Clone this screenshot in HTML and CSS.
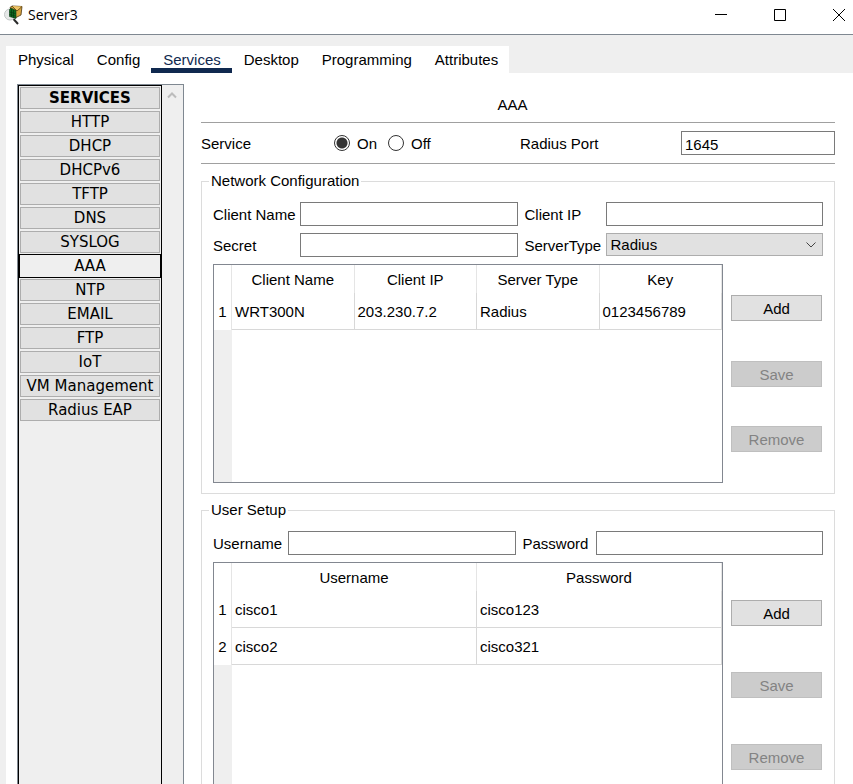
FILE: index.html
```html
<!DOCTYPE html>
<html lang="en">
<head>
  <meta charset="UTF-8" />
  <meta name="viewport" content="width=device-width, initial-scale=1.0" />
  <title>Server3</title>
  <link rel="stylesheet" href="styles.css">
</head>
<body>
  <header class="titlebar">
    <svg class="app-icon" viewBox="0 0 20 20" width="20" height="20" aria-hidden="true">
      <path d="M9.500 14l4.500 5" stroke="#2a2a2a" stroke-width="2"/>
      <circle cx="6" cy="9.500" r="5.500" fill="#e6e8e8" stroke="#c3c7c7"/>
      <path d="M6 2.500L8 1l10 .5-1 8.500-6 3z" fill="#d9a441" stroke="#4a3510" stroke-width=".8"/>
      <path d="M8 1l5 5 5-4.500" fill="#edc468" stroke="#5c400f" stroke-width=".8"/>
      <path d="M5.500 4.500L7 3l5 2.500v8L5.500 11.500z" fill="#0d6b22" stroke="#07350f" stroke-width=".6"/>
      <path d="M7.500 4v8M9.500 5v8M5.500 7l6 1.500M5.500 9.500l6 1.500" stroke="#06380f" stroke-width=".7"/>
    </svg>
    <span class="titlebar-name">Server3</span>
    <div class="window-buttons">
      <button type="button" aria-label="Minimize"><svg viewBox="0 0 12 12" width="12" height="12"><path d="M0 5.500h12"/></svg></button>
      <button type="button" aria-label="Maximize"><svg viewBox="0 0 12 12" width="12" height="12"><path d="M.5.5h11v11H.5z"/></svg></button>
      <button type="button" aria-label="Close"><svg viewBox="0 0 12 12" width="12" height="12"><path d="M0 0l12 12M12 0L0 12"/></svg></button>
    </div>
  </header>

  <div class="window-body">
    <nav class="tabs">
      <a href="#physical">Physical</a>
      <a href="#config">Config</a>
      <a href="#services" class="active">Services</a>
      <a href="#desktop">Desktop</a>
      <a href="#programming">Programming</a>
      <a href="#attributes">Attributes</a>
    </nav>

    <div class="page">
      <!-- Service list -->
      <aside class="sidebar">
        <div class="service-list">
          <button type="button" class="list-title">SERVICES</button>
          <button type="button">HTTP</button>
          <button type="button">DHCP</button>
          <button type="button">DHCPv6</button>
          <button type="button">TFTP</button>
          <button type="button">DNS</button>
          <button type="button">SYSLOG</button>
          <button type="button" class="selected">AAA</button>
          <button type="button">NTP</button>
          <button type="button">EMAIL</button>
          <button type="button">FTP</button>
          <button type="button">IoT</button>
          <button type="button">VM Management</button>
          <button type="button">Radius EAP</button>
        </div>
        <div class="scrollbar">
          <svg viewBox="0 0 10 8" width="10" height="8" aria-hidden="true"><path d="M1 6.500l4-4 4 4"/></svg>
        </div>
      </aside>

      <main class="content">
        <h1>AAA</h1>

        <div class="service-row">
          <span>Service</span>
          <div class="radios">
            <input type="radio" name="service" id="service-on" checked>
            <label for="service-on">On</label>
            <input type="radio" name="service" id="service-off">
            <label for="service-off">Off</label>
          </div>
          <label for="radius-port">Radius Port</label>
          <input type="text" id="radius-port" value="1645">
        </div>

        <!-- Network Configuration -->
        <fieldset>
          <legend>Network Configuration</legend>
          <div class="fields network-fields">
            <label for="client-name">Client Name</label>
            <input type="text" id="client-name">
            <label for="client-ip">Client IP</label>
            <input type="text" id="client-ip">
            <label for="secret">Secret</label>
            <input type="text" id="secret">
            <label for="server-type">ServerType</label>
            <div class="select">
              <select id="server-type">
                <option>Radius</option>
                <option>Tacacs</option>
              </select>
              <svg viewBox="0 0 10 6" width="10" height="6" aria-hidden="true"><path d="M.5.5L5 5 9.500.5"/></svg>
            </div>
          </div>
          <div class="records">
            <div class="table-box network-box">
              <table>
                <thead>
                  <tr><th class="num"></th><th>Client Name</th><th>Client IP</th><th>Server Type</th><th>Key</th></tr>
                </thead>
                <tbody>
                  <tr><th class="num">1</th><td>WRT300N</td><td>203.230.7.2</td><td>Radius</td><td>0123456789</td></tr>
                </tbody>
              </table>
            </div>
            <div class="actions">
              <button type="button">Add</button>
              <button type="button" disabled>Save</button>
              <button type="button" disabled>Remove</button>
            </div>
          </div>
        </fieldset>

        <!-- User Setup -->
        <fieldset>
          <legend>User Setup</legend>
          <div class="fields user-fields">
            <label for="username">Username</label>
            <input type="text" id="username">
            <label for="password">Password</label>
            <input type="text" id="password">
          </div>
          <div class="records">
            <div class="table-box user-box">
              <table>
                <thead>
                  <tr><th class="num"></th><th>Username</th><th>Password</th></tr>
                </thead>
                <tbody>
                  <tr><th class="num">1</th><td>cisco1</td><td>cisco123</td></tr>
                  <tr><th class="num">2</th><td>cisco2</td><td>cisco321</td></tr>
                </tbody>
              </table>
            </div>
            <div class="actions">
              <button type="button">Add</button>
              <button type="button" disabled>Save</button>
              <button type="button" disabled>Remove</button>
            </div>
          </div>
        </fieldset>
      </main>
    </div>
  </div>
</body>
</html>
```
FILE: styles.css
```css
* { box-sizing: border-box; }
body {
  margin: 0;
  height: 100vh;
  display: flex;
  flex-direction: column;
  overflow: hidden;
  background: #efefef;
  color: #000;
  font-family: Arial, "Liberation Sans", sans-serif;
  font-size: 15px;
  line-height: 18px;
}
button, input, select {
  font: inherit;
  color: inherit;
  margin: 0;
  border-radius: 0;
}
svg { display: block; }

/* Title bar */
.titlebar {
  flex: none;
  display: flex;
  align-items: center;
  height: 35px;
  padding: 0 8px 4px 4px;
  background: #fff;
  border-bottom: 1px solid #7f8891;
}
.titlebar-name {
  margin-left: 4px;
  font-family: "Open Sans", "Noto Sans", sans-serif;
  font-size: 14px;
}
.window-buttons {
  display: flex;
  gap: 47px;
  margin-left: auto;
}
.window-buttons button {
  padding: 0;
  border: 0;
  background: none;
}
.window-buttons path {
  fill: none;
  stroke: #000;
}

/* Tabs */
.window-body {
  flex: 1;
  min-height: 0;
  display: flex;
  flex-direction: column;
  padding: 11px 0 0 6px;
}
.tabs {
  flex: none;
  align-self: flex-start;
  display: flex;
  background: #fff;
}
.tabs a {
  height: 27px;
  padding: 5px 11px 0 12px;
  border-bottom: 5px solid transparent;
  color: #000;
  text-decoration: none;
}
.tabs .active {
  color: #10294f;
  border-color: #10294f;
}

.page {
  flex: 1;
  min-height: 0;
  display: flex;
  padding: 11px 18px 0 11px;
  background: #fff;
}

/* Service list */
.sidebar {
  flex: none;
  display: flex;
  margin-right: 17px;
  border: 1px solid #7f8891;
  border-bottom: 0;
  background: #efefef;
}
.service-list {
  width: 144px;
  display: flex;
  flex-direction: column;
  gap: 2px;
  padding: 1px;
  border: 1px solid #000;
  border-bottom: 0;
}
.service-list button {
  height: 22px;
  padding: 0;
  border: 1px solid #adadad;
  background: #e1e1e1;
  font-family: Verdana, "DejaVu Sans", sans-serif;
  line-height: 20px;
}
.service-list .list-title { font-weight: bold; }
.service-list .selected {
  border-color: #efefef;
  background: #efefef;
  outline: 1px solid #000;
}
.scrollbar {
  width: 21px;
  padding: 6px 5px;
}
.scrollbar path {
  fill: none;
  stroke: #bcbcbc;
  stroke-width: 2;
}

/* Main panel */
.content {
  flex: 1;
  min-width: 0;
}
h1 {
  margin: 0;
  padding: 12px 11px 8px 0;
  border-bottom: 1px solid #a0a0a0;
  font-size: 15px;
  font-weight: normal;
  text-align: center;
}
.service-row {
  display: grid;
  grid-template-columns: 133fr 186fr 161fr 154fr;
  align-items: center;
  height: 41px;
  margin-bottom: 8px;
  border-bottom: 1px solid #a0a0a0;
}
.service-row span, label {
  padding-top: 2px;
  white-space: nowrap;
}
.radios {
  display: flex;
  align-items: center;
}
.radios label { margin: 0 11px 0 7px; }
input[type="radio"] {
  appearance: none;
  width: 16px;
  height: 16px;
  border: 1px solid #333;
  border-radius: 50%;
  background: #fff;
}
input[type="radio"]:checked {
  background: radial-gradient(circle, #333 5px, #fff 6px);
}
input[type="text"] {
  width: 100%;
  min-width: 0;
  height: 24px;
  padding: 2px 3px 0;
  border: 1px solid #7a7a7a;
  background: #fff;
}

fieldset {
  min-width: 0;
  margin: 0 0 7px;
  padding: 12px 11px 10px;
  border: 1px solid #dcdcdc;
}
legend {
  margin-left: -4px;
  padding: 0 2px;
}
.fields {
  display: grid;
  align-items: center;
  gap: 7px;
  margin-bottom: 7px;
}
.network-fields { grid-template-columns: 80px 1fr 74px 1fr; }
.user-fields { grid-template-columns: 68px 1fr 66px 1fr; }
.select {
  position: relative;
  padding-bottom: 1px;
}
.select select {
  display: block;
  appearance: none;
  width: 100%;
  height: 23px;
  padding: 0 4px;
  border: 1px solid #adadad;
  background: #e1e1e1;
}
.select svg {
  position: absolute;
  right: 7px;
  top: 9px;
  pointer-events: none;
}
.select path {
  fill: none;
  stroke: #444;
}

/* Tables and their buttons */
.records {
  display: flex;
  gap: 8px;
}
.table-box {
  flex: 1;
  min-width: 0;
  border: 1px solid #828790;
  background: linear-gradient(to right, #efefef 18px, #fff 18px);
}
.network-box { min-height: 219px; }
.user-box { min-height: 246px; }
table {
  width: 100%;
  table-layout: fixed;
  border-collapse: separate;
  border-spacing: 0;
  background: #fff;
}
th, td {
  height: 37px;
  padding: 2px 3px 0;
  border-right: 1px solid #d8d8d8;
  border-bottom: 1px solid #d8d8d8;
  font-weight: normal;
  text-align: left;
}
thead th {
  height: 28px;
  border-right-color: #e5e5e5;
  border-bottom: 0;
  text-align: center;
}
.num {
  width: 18px;
  padding: 0;
  border-right-color: #e5e5e5;
  border-bottom: 0;
  text-align: center;
}
.actions {
  width: 91px;
  display: flex;
  flex-direction: column;
  justify-content: space-evenly;
  margin: -8px 1px -8px 0;
}
.actions button {
  height: 26px;
  padding: 2px 0 0;
  border: 1px solid #adadad;
  background: #e1e1e1;
}
.actions button:disabled {
  border-color: #bfbfbf;
  background: #ccc;
  color: #838383;
}
```
